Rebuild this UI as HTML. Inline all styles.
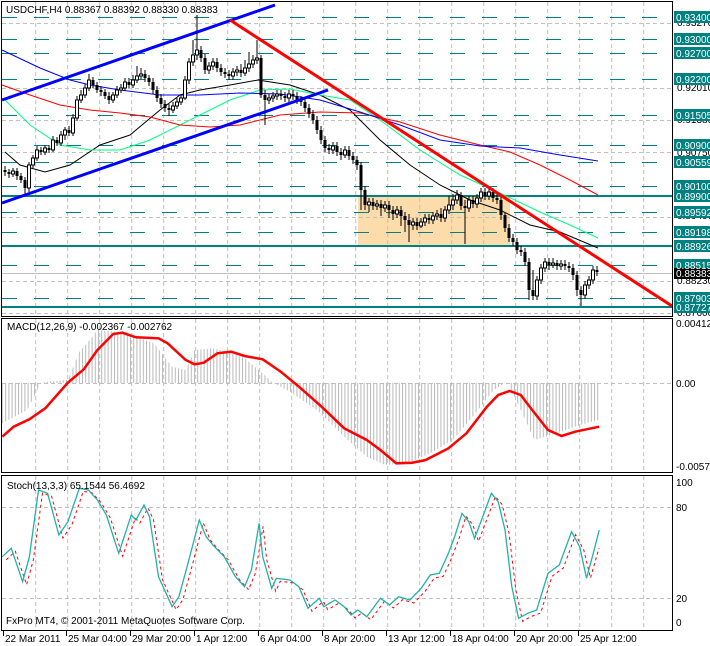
<!DOCTYPE html>
<html><head><meta charset="utf-8"><style>
html,body{margin:0;padding:0;background:#fff;width:710px;height:646px;overflow:hidden}
svg{display:block;font-family:"Liberation Sans",sans-serif;font-size:10px}
</style></head><body>
<svg width="710" height="646" xmlns="http://www.w3.org/2000/svg">
<defs>
<pattern id="hb" x="2" y="0" width="3.2" height="10" patternUnits="userSpaceOnUse"><rect x="0" y="0" width="1" height="10" fill="#b8b8b8"/></pattern>
</defs>
<rect x="358" y="196" width="152" height="50" fill="#fcdcab"/>
<!-- vertical grid -->
<path d="M35.7 2V316M67.7 2V316M99.7 2V316M131.7 2V316M163.7 2V316M195.7 2V316M227.7 2V316M259.7 2V316M291.7 2V316M323.7 2V316M355.7 2V316M387.7 2V316M419.7 2V316M451.7 2V316M483.7 2V316M515.7 2V316M547.7 2V316M579.7 2V316M611.7 2V316M643.7 2V316
M35.7 319V472M67.7 319V472M99.7 319V472M131.7 319V472M163.7 319V472M195.7 319V472M227.7 319V472M259.7 319V472M291.7 319V472M323.7 319V472M355.7 319V472M387.7 319V472M419.7 319V472M451.7 319V472M483.7 319V472M515.7 319V472M547.7 319V472M579.7 319V472M611.7 319V472M643.7 319V472
M35.7 476V630M67.7 476V630M99.7 476V630M131.7 476V630M163.7 476V630M195.7 476V630M227.7 476V630M259.7 476V630M291.7 476V630M323.7 476V630M355.7 476V630M387.7 476V630M419.7 476V630M451.7 476V630M483.7 476V630M515.7 476V630M547.7 476V630M579.7 476V630M611.7 476V630M643.7 476V630
M2 23.5H672M2 88.5H672M2 120.5H672M2 152.5H672M2 217.5H672M2 281.5H672M2 313.5H672M2 383.5H672M2 507.5H672M2 598.5H672" stroke="#c0c0c0" stroke-dasharray="4,3" fill="none"/>
<line x1="2" y1="273.5" x2="672" y2="273.5" stroke="#c0c0c0"/>
<!-- teal levels -->
<path d="M2 17.5H672M2 39.5H672M2 53.5H672M2 79.5H672M2 115.5H672M2 145.5H672M2 162.5H672M2 186.5H672M2 212.5H672M2 232.5H672M2 265.5H672M2 298.5H672" stroke="#008080" stroke-dasharray="15,17" fill="none"/>
<path d="M2 196H672M2 246H672M2 307H672" stroke="#008080" stroke-width="2" fill="none"/>
<!-- MAs -->
<polyline fill="none" stroke="#000" points="5,152 20,165 45,172 70,165 100,145 130,135 160,110 180,95 200,90 230,85 258,80 290,85 320,95 350,110 380,140 410,165 440,185 470,200 500,210 530,225 560,232 598,248"/>
<polyline fill="none" stroke="#00ff7f" points="5,100 30,125 60,145 90,150 120,150 150,140 180,125 200,115 230,100 260,90 290,89 320,95 350,100 380,120 420,150 460,175 500,193 540,212 570,225 598,238"/>
<polyline fill="none" stroke="#ff0000" points="2,85 30,95 60,105 90,110 120,113 150,117 180,125 210,127 240,125 280,115 320,112 360,113 400,122 440,135 480,145 510,152 540,165 570,180 598,195"/>
<polyline fill="none" stroke="#0000ff" points="2,50 40,68 70,80 90,85 120,90 160,95 200,95 240,93 280,94 320,100 360,112 400,125 440,140 480,146 520,148 560,155 598,161"/>
<!-- wicks -->
<path stroke="#000" fill="none" d="M5 166V176M9 169V178M13 168V177M17 168V180M21 173V183M25 177V195M29 162V192M33 155V168M37 146V161M41 147V155M45 145V155M49 145V153M53 136V152M57 137V146M61 131V146M65 127V140M69 126V136M73 114V136M77 96V121M81 90V103M85 84V98M89 74V91M93 77V88M97 82V93M101 86V96M105 89V99M109 92V104M113 92V103M117 86V98M121 84V93M125 78V91M129 78V88M133 75V88M137 66V83M141 68V79M145 70V82M149 75V86M153 78V94M157 86V102M161 94V108M165 100V112M169 104V116M173 102V113M177 98V109M181 94V105M185 76V100M189 58V84M193 40V66M197 15V60M201 46V62M205 54V74M209 62V74M213 58V70M217 58V72M221 64V76M225 68V78M229 70V80M233 68V80M237 66V76M241 64V77M245 60V76M249 52V72M253 55V68M257 40V64M261 55V98M265 90V125M269 94V104M273 92V102M277 90V100M281 90V100M285 92V102M289 90V102M293 90V100M297 92V104M301 96V106M305 98V112M309 104V118M313 110V124M317 116V134M321 126V144M325 136V152M329 144V154M333 142V154M337 142V156M341 148V160M345 146V158M349 146V160M353 152V164M357 156V170M361 162V210M365 186V210M369 198V212M373 198V210M377 200V210M381 200V216M385 201V212M389 201V218M393 206V220M397 206V218M401 206V226M405 212V232M409 214V242M413 218V230M417 218V230M421 218V228M425 214V226M429 214V224M433 212V224M437 210V220M441 208V222M445 206V222M449 196V214M453 194V210M457 190V204M461 192V210M465 200V244M469 196V212M473 196V208M477 194V208M481 188V202M485 188V200M489 186V200M493 188V202M497 194V204M501 196V220M505 212V232M509 224V242M513 234V246M517 238V254M521 246V256M525 248V266M529 258V300M533 270V300M537 276V300M541 264V284M545 258V272M549 258V270M553 258V268M557 260V270M561 260V270M565 260V270M569 262V272M573 264V280M577 271V296M581 286V306M585 281V299M589 276V289M593 266V284M597 266V276"/>
<!-- bear (black) bodies -->
<path fill="#000" d="M3.5 170h3v2h-3zM7.5 172h3v2h-3zM15.5 171h3v5h-3zM19.5 176h3v4h-3zM23.5 180h3v8h-3zM39.5 150h3v2h-3zM47.5 148h3v2h-3zM55.5 140h3v3h-3zM67.5 130h3v3h-3zM91.5 80h3v5h-3zM95.5 85h3v5h-3zM99.5 90h3v2h-3zM103.5 92h3v4h-3zM107.5 96h3v4h-3zM127.5 82h3v3h-3zM143.5 74h3v4h-3zM147.5 78h3v4h-3zM151.5 82h3v8h-3zM155.5 90h3v8h-3zM159.5 98h3v6h-3zM163.5 104h3v4h-3zM167.5 108h3v2h-3zM199.5 50h3v8h-3zM203.5 58h3v12h-3zM215.5 62h3v6h-3zM219.5 68h3v4h-3zM223.5 72h3v2h-3zM227.5 74h3v2h-3zM239.5 70h3v3h-3zM259.5 58h3v37h-3zM263.5 95h3v5h-3zM279.5 94h3v2h-3zM283.5 96h3v2h-3zM291.5 94h3v2h-3zM295.5 96h3v4h-3zM299.5 100h3v2h-3zM303.5 102h3v6h-3zM307.5 108h3v6h-3zM311.5 114h3v6h-3zM315.5 120h3v10h-3zM319.5 130h3v10h-3zM323.5 140h3v8h-3zM327.5 148h3v2h-3zM335.5 146h3v6h-3zM339.5 152h3v3h-3zM347.5 150h3v6h-3zM351.5 156h3v4h-3zM355.5 160h3v5h-3zM359.5 165h3v25h-3zM363.5 190h3v15h-3zM371.5 202h3v4h-3zM379.5 204h3v4h-3zM387.5 205h3v5h-3zM391.5 210h3v4h-3zM399.5 210h3v6h-3zM403.5 216h3v4h-3zM407.5 220h3v5h-3zM415.5 222h3v4h-3zM427.5 218h3v2h-3zM439.5 214h3v4h-3zM459.5 195h3v11h-3zM463.5 206h3v2h-3zM471.5 200h3v4h-3zM483.5 192h3v4h-3zM491.5 192h3v6h-3zM495.5 198h3v2h-3zM499.5 200h3v15h-3zM503.5 215h3v13h-3zM507.5 228h3v10h-3zM511.5 238h3v4h-3zM515.5 242h3v8h-3zM519.5 250h3v2h-3zM523.5 252h3v10h-3zM527.5 262h3v28h-3zM531.5 290h3v6h-3zM547.5 262h3v3h-3zM555.5 263h3v3h-3zM563.5 264h3v2h-3zM567.5 266h3v2h-3zM571.5 268h3v7h-3zM575.5 275h3v15h-3zM579.5 290h3v5h-3zM595.5 270h3v2h-3z"/>
<!-- bull (white) bodies -->
<path fill="#fff" stroke="#000" d="M11.5 171h3v3h-3zM27.5 165h3v23h-3zM31.5 158h3v7h-3zM35.5 150h3v8h-3zM43.5 148h3v4h-3zM51.5 140h3v10h-3zM59.5 135h3v8h-3zM63.5 130h3v5h-3zM71.5 118h3v15h-3zM75.5 100h3v18h-3zM79.5 95h3v5h-3zM83.5 88h3v7h-3zM87.5 80h3v8h-3zM111.5 95h3v5h-3zM115.5 90h3v5h-3zM119.5 88h3v2h-3zM123.5 82h3v6h-3zM131.5 80h3v5h-3zM135.5 76h3v4h-3zM139.5 74h3v2h-3zM171.5 106h3v4h-3zM175.5 102h3v4h-3zM179.5 98h3v4h-3zM183.5 80h3v18h-3zM187.5 62h3v18h-3zM191.5 55h3v7h-3zM195.5 50h3v5h-3zM207.5 66h3v4h-3zM211.5 62h3v4h-3zM231.5 72h3v4h-3zM235.5 70h3v2h-3zM243.5 68h3v5h-3zM247.5 64h3v4h-3zM251.5 60h3v4h-3zM255.5 58h3v2h-3zM267.5 98h3v2h-3zM271.5 96h3v2h-3zM275.5 94h3v2h-3zM287.5 94h3v4h-3zM331.5 146h3v4h-3zM343.5 150h3v5h-3zM367.5 202h3v3h-3zM375.5 204h3v2h-3zM383.5 205h3v3h-3zM395.5 210h3v4h-3zM411.5 222h3v3h-3zM419.5 222h3v4h-3zM423.5 218h3v4h-3zM431.5 216h3v4h-3zM435.5 214h3v2h-3zM443.5 210h3v8h-3zM447.5 205h3v5h-3zM451.5 200h3v5h-3zM455.5 195h3v5h-3zM467.5 200h3v8h-3zM475.5 198h3v6h-3zM479.5 192h3v6h-3zM487.5 192h3v4h-3zM535.5 280h3v16h-3zM539.5 268h3v12h-3zM543.5 262h3v6h-3zM551.5 263h3v2h-3zM559.5 264h3v2h-3zM583.5 285h3v10h-3zM587.5 280h3v5h-3zM591.5 270h3v10h-3z"/>
<!-- channels & trend -->
<line x1="2" y1="100" x2="275" y2="5" stroke="#0000ff" stroke-width="3"/>
<line x1="2" y1="203" x2="328" y2="90" stroke="#0000ff" stroke-width="3"/>
<line x1="230" y1="20" x2="672" y2="306" stroke="#ff0000" stroke-width="3"/>
<!-- MACD histogram -->
<polygon fill="url(#hb)" points="2.3,383 2.3,423.3 27.2,410 40.8,383.3 45.3,381.7 67.9,380 79.3,351.7 88.3,341.7 97.4,330 117.8,331.7 135.9,336.7 154,343.3 172.1,366.7 185.7,370 194.7,350 212.9,348.3 226.4,351.7 244.6,358.3 262.7,373.3 271.7,381.7 289.9,391.7 317,410 344.2,436.7 366.8,456.7 385,465 407.6,463.3 430.3,453.3 452.9,440 475.5,413.3 493.7,390 507.2,381.7 520.8,410 534.4,440 557.1,433.3 579.7,425 599.2,420 599.2,383"/>
<polyline fill="none" stroke="#ff0000" stroke-width="2.5" points="2.3,436.7 13.6,426.7 29.4,419.3 45.3,408.3 67.9,382.7 83.8,369.3 97.4,350 113.2,334 122.3,332.7 135.9,337.3 158.5,338.3 167.6,343.3 185.7,360 194.7,364.3 203.8,362.7 217.4,353.3 231,351.7 244.6,356 262.7,359.3 280.8,371.7 298.9,386.7 321.6,406.7 344.2,428.3 366.8,440 380.4,450 396.3,463.3 412.1,462.7 425.7,460 448.4,448.3 466.5,433.3 486.9,406.7 498.2,395 509.5,391 520.8,395 532.2,410 548,430 561.6,436 575.2,431.7 599.2,426.7"/>
<!-- Stoch -->
<polyline fill="none" stroke="#ff0000" stroke-dasharray="3,3" transform="translate(4,3)" points="2.3,556.7 11.3,548.3 22.6,581.7 29.4,556.7 38.5,490 47.6,493.3 58.9,535 67.9,521.7 79.3,488.3 88.3,490 97.4,500 106.4,515 118.7,553.3 131.3,515 135.9,520 144,505 149.5,516.7 158.5,576.7 172.1,606.7 178.9,596.7 188,563.3 199.3,520 206.1,536.7 212.9,545 224.2,556.7 235.5,576.7 244.6,586.7 251.4,570 259.1,523.3 262.7,556.7 271.7,588.3 276.3,578.3 289.9,580 298.9,586.7 308,608.3 319.3,598.3 323.8,606.7 335.1,600 344.2,606.7 351,615 357.8,610 366.8,616.7 380.4,598.3 389.5,605 398.6,596.7 409.9,600 421.2,588.3 430.3,575 439.3,573.3 448.4,553.3 455.2,535 462,513.3 468.8,521.7 474.6,538.3 484.6,511.7 491.4,493.3 498.2,501.7 505,530 511.8,586.7 518.6,618.3 527.6,613.3 536.7,610 548,573.3 559.3,565 571.6,531.7 579.7,546.7 586.5,575 595,545"/>
<polyline fill="none" stroke="#20b2aa" stroke-width="1.3" points="2.3,556.7 11.3,548.3 22.6,581.7 29.4,556.7 38.5,490 47.6,493.3 58.9,535 67.9,521.7 79.3,488.3 88.3,490 97.4,500 106.4,515 118.7,553.3 131.3,515 135.9,520 144,505 149.5,516.7 158.5,576.7 172.1,606.7 178.9,596.7 188,563.3 199.3,520 206.1,536.7 212.9,545 224.2,556.7 235.5,576.7 244.6,586.7 251.4,570 259.1,523.3 262.7,556.7 271.7,588.3 276.3,578.3 289.9,580 298.9,586.7 308,608.3 319.3,598.3 323.8,606.7 335.1,600 344.2,606.7 351,615 357.8,610 366.8,616.7 380.4,598.3 389.5,605 398.6,596.7 409.9,600 421.2,588.3 430.3,575 439.3,573.3 448.4,553.3 455.2,535 462,513.3 468.8,521.7 474.6,538.3 484.6,511.7 491.4,493.3 498.2,501.7 505,530 511.8,586.7 518.6,618.3 527.6,613.3 536.7,610 548,573.3 559.3,565 571.6,531.7 579.7,546.7 586.5,578.3 593.3,553.3 599.2,530"/>
<!-- frames -->
<rect x="1.5" y="1.5" width="671" height="315" fill="none" stroke="#000"/>
<rect x="1.5" y="318.5" width="671" height="154" fill="none" stroke="#000"/>
<rect x="1.5" y="475.5" width="671" height="155" fill="none" stroke="#000"/>
<!-- right axis -->
<g fill="#000">
<text x="677" y="26">0.93270</text><text x="677" y="91">0.92010</text><text x="677" y="123">0.91380</text><text x="677" y="156">0.90750</text><text x="677" y="219">0.89490</text><text x="677" y="284">0.88230</text><text x="677" y="316">0.87600</text>
</g>
<g fill="#008080">
<rect x="674" y="11" width="36" height="12"/><rect x="674" y="33" width="36" height="12"/><rect x="674" y="47" width="36" height="12"/><rect x="674" y="73" width="36" height="12"/><rect x="674" y="109" width="36" height="12"/><rect x="674" y="139" width="36" height="12"/><rect x="674" y="156" width="36" height="12"/><rect x="674" y="180" width="36" height="12"/><rect x="674" y="190" width="36" height="12"/><rect x="674" y="206" width="36" height="12"/><rect x="674" y="226" width="36" height="12"/><rect x="674" y="240" width="36" height="12"/><rect x="674" y="259" width="36" height="12"/><rect x="674" y="292" width="36" height="12"/><rect x="674" y="301" width="36" height="12"/>
</g>
<rect x="674" y="268" width="36" height="11" fill="#000"/>
<g fill="#fff">
<text x="676" y="21">0.93400</text><text x="676" y="43">0.93000</text><text x="676" y="57">0.92700</text><text x="676" y="83">0.92200</text><text x="676" y="119">0.91505</text><text x="676" y="149">0.90900</text><text x="676" y="166">0.90559</text><text x="676" y="190">0.90100</text><text x="676" y="200">0.89900</text><text x="676" y="216">0.89592</text><text x="676" y="236">0.89198</text><text x="676" y="250">0.88926</text><text x="676" y="269">0.88515</text><text x="676" y="302">0.87903</text><text x="676" y="311">0.87727</text><text x="676" y="277">0.88383</text>
</g>
<g fill="#000">
<text x="6" y="13">USDCHF,H4  0.88367 0.88392 0.88330 0.88383</text>
<text x="7" y="330">MACD(12,26,9) -0.002367 -0.002762</text>
<text x="676" y="327">0.00412</text><text x="676" y="387">0.00</text><text x="676" y="470">-0.00571</text>
<text x="7" y="489">Stoch(13,3,3) 65.1544 56.4692</text>
<text x="676" y="486">100</text><text x="676" y="511">80</text><text x="676" y="602">20</text><text x="676" y="626">0</text>
<text x="6" y="624">FxPro MT4, © 2001-2011 MetaQuotes Software Corp.</text>
<text x="5" y="642">22 Mar 2011</text><text x="68" y="642">25 Mar 04:00</text><text x="132" y="642">29 Mar 20:00</text><text x="196" y="642">1 Apr 12:00</text><text x="260" y="642">6 Apr 04:00</text><text x="324" y="642">8 Apr 20:00</text><text x="388" y="642">13 Apr 12:00</text><text x="452" y="642">18 Apr 04:00</text><text x="516" y="642">20 Apr 20:00</text><text x="580" y="642">25 Apr 12:00</text>
</g>
<path stroke="#000" d="M3.5 631V636M66.5 631V636M130.5 631V636M194.5 631V636M258.5 631V636M322.5 631V636M386.5 631V636M450.5 631V636M514.5 631V636M578.5 631V636"/>
</svg>
</body></html>
